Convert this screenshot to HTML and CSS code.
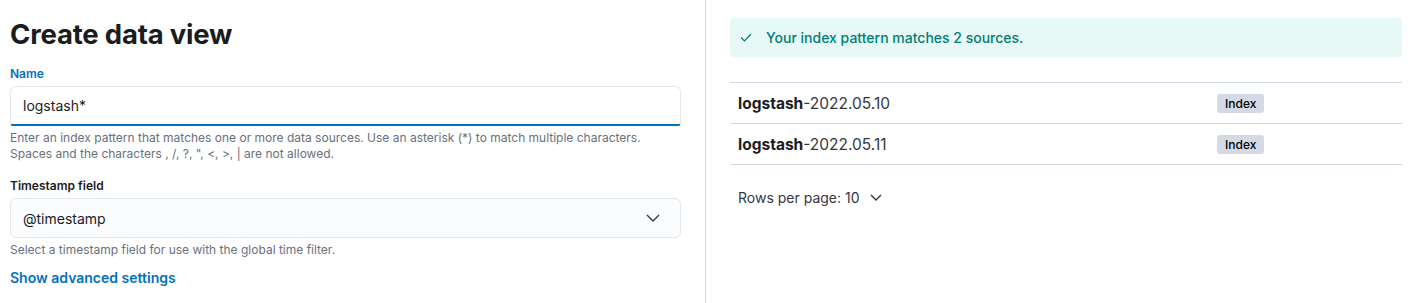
FILE: index.html
```html
<!DOCTYPE html>
<html lang="en">
  <head>
    <meta charset="UTF-8" />
    <meta name="viewport" content="width=device-width, initial-scale=1.0" />
    <title>Create data view</title>
    <link rel="stylesheet" href="styles.css">
  </head>
  <body>
    <div class="layout">
      <div class="form-panel">
        <h1>Create data view</h1>

        <label class="field-label active" for="name">Name</label>
        <div class="input focused">
          <span>logstash*</span>
        </div>
        <div class="help">
          Enter an index pattern that matches one or more data sources. Use an asterisk (*) to match multiple characters.<br>
          Spaces and the characters , /, ?, ", &lt;, &gt;, | are not allowed.
        </div>

        <label class="field-label second">Timestamp field</label>
        <div class="input select">
          <span>@timestamp</span>
          <svg width="14" height="8" viewBox="0 0 14 8">
            <path d="M1 1 L7 7 L13 1" fill="none" stroke="#343741" stroke-width="1.4" />
          </svg>
        </div>
        <div class="help">Select a timestamp field for use with the global time filter.</div>

        <a class="advanced" href="#">Show advanced settings</a>
      </div>

      <div class="preview-panel">
        <div class="callout">
          <svg width="12" height="9" viewBox="0 0 12 9">
            <path d="M1 4.5 L4.5 8 L11 1" fill="none" stroke="#017d73" stroke-width="1.2" />
          </svg>
          <span>Your index pattern matches 2 sources.</span>
        </div>

        <table class="sources">
          <tbody>
            <tr>
              <td class="name"><b>logstash</b>-2022.05.10</td>
              <td><span class="badge">Index</span></td>
            </tr>
            <tr>
              <td class="name"><b>logstash</b>-2022.05.11</td>
              <td><span class="badge">Index</span></td>
            </tr>
          </tbody>
        </table>

        <div class="pager">
          <span>Rows per page: 10</span>
          <svg width="12" height="7" viewBox="0 0 12 7">
            <path d="M1 1 L6 6 L11 1" fill="none" stroke="#343741" stroke-width="1.4" />
          </svg>
        </div>
      </div>
    </div>
  </body>
</html>
```

FILE: styles.css
```css
body {
  margin: 0;
  font-family: Inter, "Noto Sans", sans-serif;
  color: #343741;
  background: #fff;
}

.layout {
  display: flex;
  height: 303px;
}

.form-panel {
  width: 671px;
  padding: 14px 24px 0 10px;
  border-right: 1px solid #d3dae6;
}

h1 {
  margin: 0;
  font-size: 27.5px;
  line-height: 40px;
  font-weight: 700;
  color: #1a1c21;
  letter-spacing: -0.2px;
}

.field-label {
  display: block;
  margin-top: 12px;
  margin-bottom: 4px;
  font-size: 12px;
  line-height: 16px;
  font-weight: 600;
  color: #1a1c21;
}

.field-label.active {
  color: #0071c2;
}

.field-label.second {
  margin-top: 16px;
}

.input {
  display: flex;
  align-items: center;
  justify-content: space-between;
  box-sizing: border-box;
  height: 40px;
  padding: 0 20px 0 12px;
  background: #fbfcfd;
  border: 1px solid #e3e7ee;
  border-radius: 6px;
  font-size: 14px;
  color: #1a1c21;
}

.input.focused {
  background: #fff;
  border-bottom: 2px solid #0071c2;
  border-bottom-left-radius: 3px;
  border-bottom-right-radius: 3px;
}

.help {
  margin-top: 4px;
  font-size: 12px;
  line-height: 16px;
  color: #69707d;
}

.advanced {
  display: block;
  margin-top: 10px;
  font-size: 14px;
  line-height: 20px;
  font-weight: 600;
  color: #0071c2;
  text-decoration: none;
}

.preview-panel {
  flex: 1;
  padding: 18px 15px 0 24px;
}

.callout {
  display: flex;
  align-items: center;
  gap: 14px;
  height: 39px;
  padding: 0 10px;
  background: #e6f9f7;
  border-radius: 4px;
  font-size: 14px;
  font-weight: 500;
  color: #017d73;
}

.sources {
  width: 100%;
  margin-top: 25px;
  border-collapse: collapse;
  border-top: 1px solid #d3dae6;
}

.sources td {
  height: 40px;
  padding: 0 8px;
  border-bottom: 1px solid #d3dae6;
  font-size: 15.5px;
  color: #343741;
}

.sources td.name {
  width: 463px;
}

.sources b {
  font-weight: 700;
  color: #1a1c21;
}

.badge {
  display: inline-block;
  padding: 0 8px;
  line-height: 19px;
  background: #d3dae6;
  border-radius: 3px;
  font-size: 12px;
  font-weight: 500;
  color: #000;
  vertical-align: middle;
}

.pager {
  display: flex;
  align-items: center;
  gap: 10px;
  height: 26px;
  margin-top: 19px;
  padding-left: 8px;
  font-size: 14px;
  color: #343741;
}
```
